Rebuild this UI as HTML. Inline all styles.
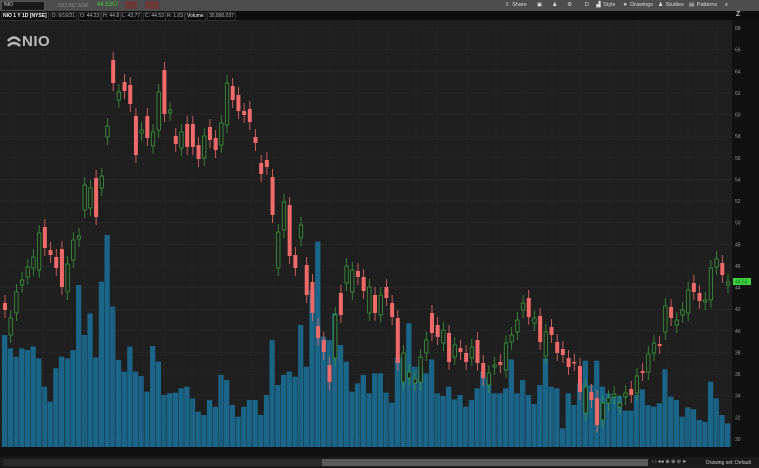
<!DOCTYPE html>
<html><head><meta charset="utf-8"><style>
body{margin:0;width:759px;height:468px;overflow:hidden;background:#1f1f1f;font-family:"Liberation Sans",sans-serif;position:relative}
.top{position:absolute;left:0;top:0;width:759px;height:11px;background:#4d4d4d}
.info{position:absolute;left:0;top:11px;width:759px;height:9px;background:#0d0d0d}
.box{position:absolute;top:12px;height:7px;border:1px solid #333;color:#bbb;font-size:5px;line-height:7px;padding:0 1px}
.t{position:absolute;font-size:5px;color:#ddd}
</style></head><body>
<div class="top"></div>
<div style="position:absolute;left:1px;top:1px;width:42px;height:8px;background:#1a1a1a;border:1px solid #555"></div>
<div class="t" style="left:4px;top:2px">NIO</div>
<div class="t" style="left:58px;top:3px;color:#888">NIO INC ADR</div>
<div class="t" style="left:97px;top:2px;color:#3fcf3f;font-size:6px">44.5307</div>
<div style="position:absolute;left:125px;top:1px;width:12px;height:8px;background:#6a3a3a"></div>
<div style="position:absolute;left:145px;top:1px;width:14px;height:8px;background:#6a3a3a"></div>
<div class="t" style="left:505px;top:2px;font-size:5.5px;word-spacing:1px">⇪ Share &nbsp;&nbsp; ▣ &nbsp;&nbsp; ♟ &nbsp;&nbsp; ⚙ &nbsp;&nbsp;&nbsp; D &nbsp; ▟ Style &nbsp; ➤ Drawings &nbsp;♟ Studies &nbsp;▤ Patterns &nbsp; ≡</div>
<div class="info"></div>
<div class="box" style="left:1px;color:#fff;font-weight:bold">NIO 1 Y 1D [NYSE]</div>
<div class="box" style="left:50px">D: 6/16/21</div>
<div class="box" style="left:78px">O: 44.23</div>
<div class="box" style="left:101px">H: 44.8</div>
<div class="box" style="left:120px">L: 43.77</div>
<div class="box" style="left:143px">C: 44.53</div>
<div class="box" style="left:165px">R: 1.03</div>
<div class="box" style="left:185px;color:#fff">Volume</div>
<div class="box" style="left:207px">30,890,037</div>
<div style="position:absolute;left:732px;top:20px;width:27px;height:428px;background:#111"></div>
<div class="t" style="left:736px;top:11px;color:#fff;font-size:7px">Z</div>
<svg id="c" width="759" height="468" style="position:absolute;left:0;top:0"></svg>
<div style="position:absolute;left:6px;top:33px;color:#b9b9b9;font-size:15px;font-weight:bold;letter-spacing:0.5px">
<svg width="16" height="12" viewBox="0 0 16 12" style="vertical-align:-1px"><path d="M2 6 Q8 -1 14 6" stroke="#b9b9b9" stroke-width="2.6" fill="none"/><path d="M2 11 Q8 5 14 11" stroke="#b9b9b9" stroke-width="2.6" fill="none"/></svg>NIO</div>
<div style="position:absolute;left:0;top:447px;width:759px;height:10px;background:#111"></div>
<div style="position:absolute;left:0;top:457px;width:759px;height:11px;background:#1a1a1a"></div>
<div style="position:absolute;left:3px;top:459px;width:645px;height:7px;background:#2a2a2a"></div>
<div style="position:absolute;left:322px;top:459px;width:326px;height:7px;background:#5a5a5a"></div>
<div class="t" style="left:652px;top:459px;color:#ccc">‹ › ●● ⊕ ⊕ ⊖ ➤</div>
<div class="t" style="left:706px;top:460px;color:#ccc">Drawing set: Default</div>
<script>
var B=[[303,310,0],[318,335,1],[292,313,1],[280,285,1],[267,277,1],[257,268,1],[233,270,1],[227,248,0],[250,255,0],[257,268,0],[249,287,0],[264,292,1],[240,260,1],[236,239,1],[185,210,1],[188,208,1],[178,217,0],[176,188,1],[126,137,1],[60,83,0],[92,100,1],[82,91,0],[85,104,0],[116,155,0],[130,133,1],[116,138,0],[132,146,1],[92,130,1],[70,114,0],[110,113,1],[136,144,0],[132,148,1],[124,147,0],[124,147,0],[145,159,0],[136,158,1],[127,140,0],[138,150,0],[123,145,1],[83,125,1],[86,100,0],[95,111,0],[111,115,0],[109,122,0],[137,143,0],[163,174,0],[160,167,0],[177,215,0],[232,268,1],[202,230,1],[205,256,0],[255,268,0],[225,238,1],[265,295,0],[282,313,0],[326,338,0],[340,352,0],[365,382,0],[315,358,1],[293,315,0],[266,283,1],[270,292,1],[271,277,0],[277,291,0],[287,313,1],[295,313,0],[295,315,1],[287,298,0],[303,317,0],[318,363,0],[353,382,1],[372,378,1],[379,383,1],[357,382,1],[340,353,1],[313,333,0],[325,337,0],[330,343,1],[333,362,0],[345,357,1],[348,352,0],[353,362,0],[347,358,1],[340,363,0],[363,378,0],[373,385,1],[365,367,1],[362,365,0],[343,370,1],[335,342,1],[320,332,1],[303,310,1],[298,317,0],[318,323,1],[316,342,0],[332,356,1],[327,335,0],[342,353,0],[349,355,0],[358,367,0],[362,363,0],[366,392,0],[387,413,1],[392,400,0],[398,425,0],[403,420,1],[398,403,1],[394,397,1],[403,407,1],[393,397,1],[389,395,0],[376,393,1],[371,373,0],[354,372,1],[343,353,1],[344,346,0],[306,332,1],[307,318,0],[320,325,1],[310,315,1],[290,313,1],[283,292,0],[293,301,0],[300,302,1],[268,300,1],[259,267,1],[263,275,0],[282,285,1]];
var V4=[945,985,1010,985,990,980,1015,1100,1145,1045,1010,1015,990,795,945,880,1012,785,645,860,1020,1055,980,1055,1068,1115,978,1025,1125,1120,1118,1105,1100,1135,1175,1185,1140,1160,1065,1080,1155,1190,1160,1140,1140,1185,1125,960,1095,1065,1055,1070,915,1040,810,665,950,960,880,975,1025,1115,1090,1065,1120,1060];
var V5=[1060,1118,1148,1012,1012,910,1040,1040,1060,1018,1120,1128,1100,1138,1125,1160,1140,1105,1055,1075,1120,1120,1105,1018,1120,1080,1125,1152,1095,1015,1100,1105,1225,1120,1155,1090,1022,1095,1022,1100,1120,1130,1128,1172,1172,1125,1108,1155,1160,1150,1048,1130,1140,1190,1162,1168,1200,1205,1085,1135,1185,1210];
var V=V4.map(function(v){return 20+v/3}).concat(V5.map(function(v){return 20+v/3}));
var s='';
for(var p=68;p>=30;p-=2){var y=28+(68-p)*10.816;s+='<line x1="0" x2="732" y1="'+y+'" y2="'+y+'" stroke="#2b2b2b" stroke-width="0.6"/>';s+='<text x="735" y="'+(y+2)+'" fill="#999" font-size="5" font-family="Liberation Sans">'+p+'</text>';}
var D=[['12/14',14],['12/21',43],['12/28',65],['1/4',85],['1/11',114],['1/18',143],['1/25',165],['2/1',192],['2/8',221],['2/15',251],['2/22',274],['3/1',300],['3/8',330],['3/15',359],['3/22',387],['3/29',416],['4/5',437],['4/12',467],['4/19',496],['4/26',524],['5/3',552],['5/10',581],['5/17',610],['5/24',639],['5/31',667],['6/7',688],['6/14',717]];
var st=(723/127);
for(var i=0;i<128;i++){var x=2+i*st;var t=V[i]||430;s+='<rect x="'+x+'" y="'+t+'" width="'+(st-0.4)+'" height="'+(447-t)+'" fill="#1a6588"/>';}
D.forEach(function(d){s+='<line x1="'+d[1]+'" x2="'+d[1]+'" y1="20" y2="447" stroke="#2e2e2e" stroke-width="0.6" stroke-dasharray="1,1"/>';s+='<text x="'+(d[1]-4)+'" y="454" fill="#bbb" font-size="5" font-family="Liberation Sans">'+d[0]+'</text>';});
for(var i=0;i<B.length;i++){var b=B[i];var x=5+i*st;var c=b[2]?'#3a9a3a':'#f06a6a';var h=Math.max(b[1]-b[0],1.5);
s+='<line x1="'+x+'" x2="'+x+'" y1="'+(b[0]-8)+'" y2="'+(b[1]+8)+'" stroke="'+c+'" stroke-width="0.8"/>';
if(b[2])s+='<rect x="'+(x-1.7)+'" y="'+b[0]+'" width="3.4" height="'+h+'" fill="#1f1f1f" stroke="'+c+'" stroke-width="0.8"/>';
else s+='<rect x="'+(x-2)+'" y="'+b[0]+'" width="4" height="'+h+'" fill="'+c+'"/>';}
s+='<rect x="733" y="278" width="18" height="7" fill="#3fd43f"/><text x="735" y="283.5" fill="#062" font-size="5" font-family="Liberation Sans">44.53</text>';
document.getElementById('c').innerHTML=s;
</script>
</body></html>
